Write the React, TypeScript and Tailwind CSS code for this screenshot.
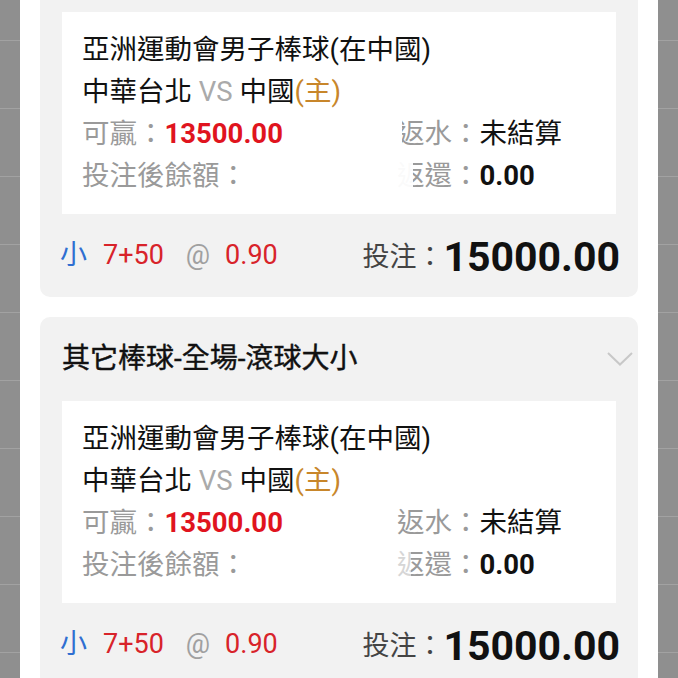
const stripRows = Array.from({ length: 10 });

function Strip() {
  return (
    <div className="w-[20px] shrink-0 bg-[#8f8f8f] flex flex-col">
      <div className="h-[40px] shrink-0" />
      {stripRows.map((_, i) => (
        <div key={i} className="h-[68px] shrink-0 border-t border-[#a2a2a2]" />
      ))}
    </div>
  );
}

function BetBox({ first }: { first: boolean }) {
  return (
    <div className="bg-white mx-[22px] px-5 py-[17px] text-[27.5px] leading-[42px] text-[#111]">
      <div>亞洲運動會男子棒球(在中國)</div>
      <div>
        中華台北 <span className="text-[#aaaaaa]">VS</span> 中國
        <span className="text-[#c8862a]">(主)</span>
      </div>
      <div className="grid grid-cols-[315px_1fr]">
        <div>
          <span className="text-[#9a9a9a]">可贏：</span>
          <span className="font-bold text-[#e0141e]">13500.00</span>
        </div>
        <div className="relative">
          <span className="text-[#9a9a9a]">返水：</span>
          <span>未結算</span>
          {first && <span className="absolute left-0 top-0 h-full w-[5px] bg-white" />}
        </div>
        <div className="text-[#9a9a9a]">投注後餘額：</div>
        <div className="relative">
          <span className="text-[#9a9a9a]">返還：</span>
          <span className="font-bold">0.00</span>
          <span
            className={
              first
                ? 'absolute left-0 top-0 h-full w-[16px] bg-white/95'
                : 'absolute left-0 top-0 h-full w-[14px] bg-white/60'
            }
          />
        </div>
      </div>
    </div>
  );
}

function Footer() {
  return (
    <div className="h-[83px] pl-5 pr-[18px] flex items-center justify-between">
      <div className="flex items-center text-[27px]">
        <span className="text-[#2f6fd1]">小</span>
        <span className="ml-4 text-[#d8232a]">7+50</span>
        <span className="ml-[22px] text-[#a0a0a0]">@</span>
        <span className="ml-[15px] text-[#d8232a]">0.90</span>
      </div>
      <div className="flex items-center pt-[3px]">
        <span className="text-[27px] text-[#444]">投注：</span>
        <span className="text-[41px] font-bold text-[#111] leading-none">15000.00</span>
      </div>
    </div>
  );
}

export default function App() {
  return (
    <div className="w-[678px] h-[678px] overflow-hidden flex bg-[#8f8f8f] font-[Roboto,'Noto_Sans_CJK_TC',sans-serif]">
      <Strip />
      <div className="flex-1 bg-white px-5 flex flex-col gap-5 overflow-hidden">
        <div className="shrink-0 bg-[#f2f2f2] rounded-b-[10px] pt-3">
          <BetBox first />
          <Footer />
        </div>
        <div className="shrink-0 bg-[#f2f2f2] rounded-[10px]">
          <div className="h-[84px] pl-[22px] pr-[5px] flex items-center justify-between">
            <span className="text-[28px] text-[#111] [-webkit-text-stroke:0.4px_#111]">其它棒球-全場-滾球大小</span>
            <svg width="26" height="14" viewBox="0 0 26 14" fill="none">
              <polyline points="1,1 13,12.5 25,1" stroke="#c8c8c8" strokeWidth="2" />
            </svg>
          </div>
          <BetBox first={false} />
          <Footer />
        </div>
      </div>
      <Strip />
    </div>
  );
}
